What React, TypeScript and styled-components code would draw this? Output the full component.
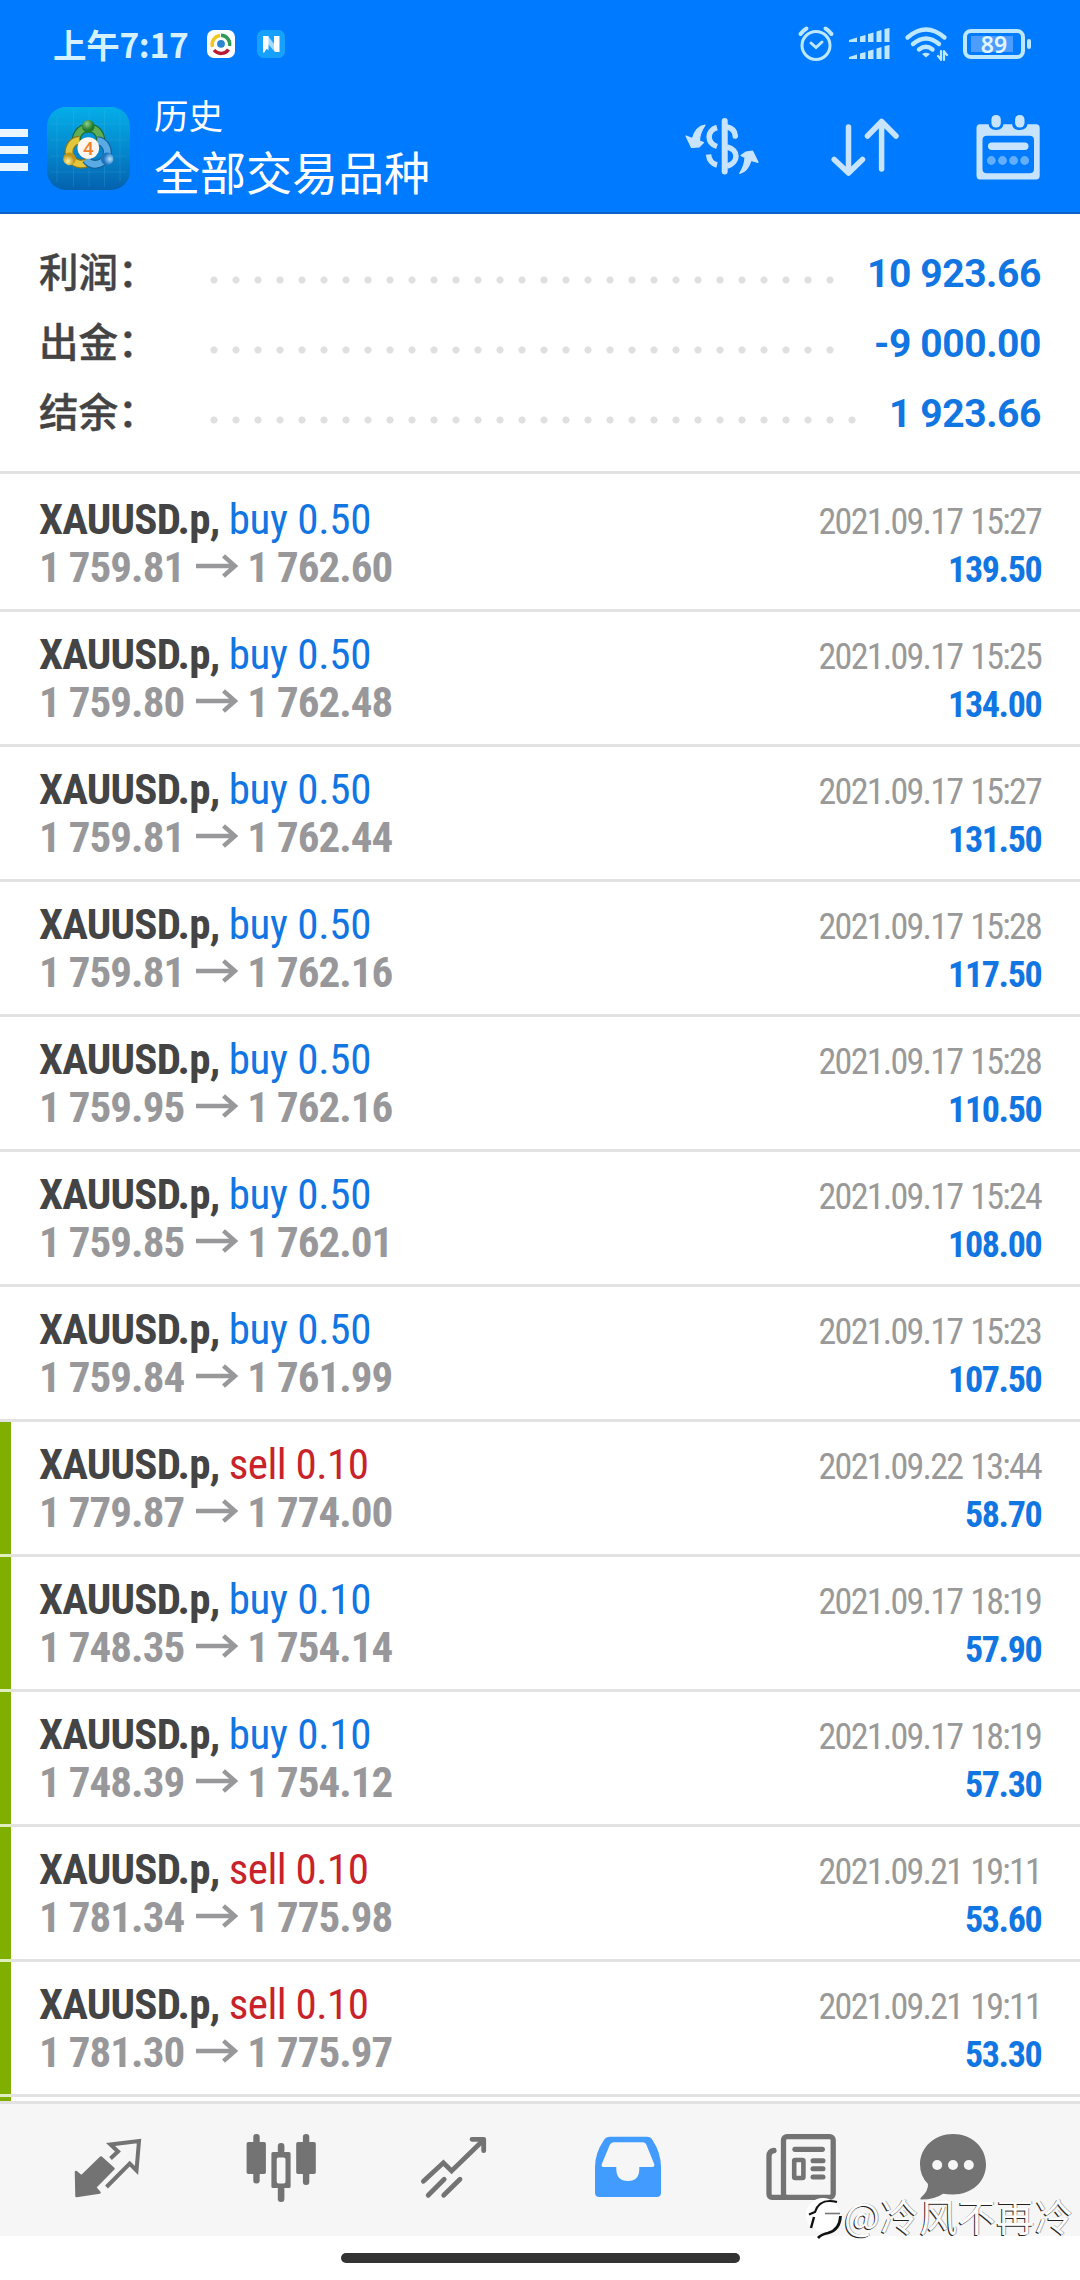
import React from "react";
import styled, { createGlobalStyle, css } from "styled-components";

const cjk = `"Noto Sans CJK SC", sans-serif`;
const condensed = `"Roboto Condensed", Roboto, sans-serif`;

const GlobalStyle = createGlobalStyle`
  * { box-sizing: border-box; }
  body { margin: 0; background: #fff; }
  svg { display: block; overflow: visible; flex: none; }
`;

const Screen = styled.div`
  width: 1080px;
  height: 2280px;
  display: flex;
  flex-direction: column;
  overflow: hidden;
  background: #fff;
`;

/* ---------- status bar + header ---------- */

const Top = styled.header`
  height: 214px;
  flex: none;
  background: #007aff;
  border-bottom: 2px solid #0a63c4;
`;

const StatusBar = styled.div`
  height: 88px;
  padding: 0 49px 0 53px;
  display: flex;
  align-items: center;
  justify-content: space-between;
`;

const StatusGroup = styled.div<{ $gap: number }>`
  display: flex;
  align-items: center;
  gap: ${(p) => p.$gap}px;
`;

const Clock = styled.span`
  width: 132px;
  font: 700 33.5px/48px ${cjk};
  letter-spacing: -0.3px;
  color: #d5f1ff;
  white-space: nowrap;
`;

const BatteryLevel = styled.div`
  display: flex;
  align-items: center;
  gap: 2px;
  &::after {
    content: "";
    width: 4px;
    height: 10px;
    border-radius: 2px;
    background: #bde8ff;
  }
`;

const BatteryCell = styled.div`
  width: 62px;
  height: 30px;
  border: 4px solid #bde8ff;
  border-radius: 8px;
  display: flex;
  justify-content: center;
  padding: 3px;
  font: 600 23px/16px "Noto Sans", sans-serif;
  color: #e2f6ff;
  background: linear-gradient(#4d9dff, #4d9dff) 4px 3px / 42px 16px no-repeat;
`;

const TitleBar = styled.div`
  height: 124px;
  display: flex;
  align-items: center;
  padding: 0 40px 4px 0;
`;

const MenuButton = styled.div`
  flex: none;
  width: 46.5px;
  display: flex;
  flex-direction: column;
  gap: 9px;
  padding-top: 3px;
`;

const MenuLine = styled.i`
  width: 27.5px;
  height: 8px;
  background: #e9f5ff;
`;

const Titles = styled.div`
  flex: 1;
  padding: 0 0 6px 24.5px;
  color: #fff;
  font-family: ${cjk};
`;

const Caption = styled.div`
  font-size: 34.5px;
  line-height: 50px;
`;

const Heading = styled.div`
  font-size: 46px;
  line-height: 62px;
`;

const Actions = styled.div`
  display: flex;
  align-items: flex-start;
  gap: 72px;
  padding-bottom: 4px;
`;

/* ---------- summary ---------- */

const Summary = styled.section`
  flex: none;
  height: 260px;
  padding: 24px 39px 0 39px;
  border-bottom: 3px solid #e2e2e2;
`;

const SummaryRow = styled.div`
  height: 70px;
  display: flex;
  align-items: center;
`;

const SummaryLabel = styled.div`
  width: 164px;
  margin-top: -6px;
  font: 500 39.5px/70px ${cjk};
  -webkit-text-stroke: 0.4px #444;
  color: #444;
`;

const Leader = styled.div<{ $dots: number }>`
  width: ${(p) => p.$dots * 22}px;
  height: 8px;
  margin-top: 14px;
  background: radial-gradient(circle at 11px 4px, #e0e0e0 3.1px, transparent 4px) 0 0 / 22px 8px;
`;

const SummaryValue = styled.div`
  margin: 2px 0 0 auto;
  font: 700 39px/70px Roboto, sans-serif;
  letter-spacing: -0.4px;
  color: #1276e2;
`;

/* ---------- deals ---------- */

const DealList = styled.main`
  flex: none;
  height: 1627px;
  padding-top: 3px;
  overflow: hidden;
`;

const Deal = styled.article<{ $marked?: boolean }>`
  height: 135px;
  display: flex;
  justify-content: space-between;
  padding: 18px 38px 0 39px;
  border-bottom: 3px solid #e2e2e2;
  white-space: nowrap;
  ${(p) =>
    p.$marked &&
    css`
      border-left: 11px solid #7fb000;
      padding-left: 28px;
      border-bottom: 0;
      background: linear-gradient(#e2e2e2, #e2e2e2) 0 100% / 100% 3px no-repeat;
      border-image: linear-gradient(#7fb000 132px, #dfedbf 132px) 0 0 0 11;
    `}
`;

const DealSide = styled.div<{ $end?: boolean }>`
  display: flex;
  flex-direction: column;
  align-items: ${(p) => (p.$end ? "flex-end" : "flex-start")};
`;

const Symbol = styled.div`
  font: 700 43px/48px ${condensed};
  letter-spacing: -0.8px;
  color: #444;
`;

const Order = styled.span<{ $sell: boolean }>`
  font-weight: 400;
  letter-spacing: ${(p) => (p.$sell ? -0.5 : -0.3)}px;
  color: ${(p) => (p.$sell ? "#c8232a" : "#1276e2")};
`;

const Prices = styled.div`
  display: flex;
  align-items: center;
  font: 700 43px/48px ${condensed};
  letter-spacing: -0.95px;
  color: #98989b;
  svg { margin: 0 9.5px 0 11.5px; }
`;

const DealTime = styled.div`
  font: 400 36px/48px ${condensed};
  letter-spacing: -1.75px;
  word-spacing: 1.5px;
  padding: 3px 1px 0 0;
  color: #999;
`;

const DealProfit = styled.div`
  font: 700 36px/48px ${condensed};
  letter-spacing: -1.35px;
  padding-right: 0.6px;
  color: #1276e2;
`;

/* ---------- bottom ---------- */

const NavBar = styled.nav`
  flex: none;
  height: 135px;
  border-top: 3px solid #e2e2e2;
  background: #f6f6f6;
  display: flex;
  align-items: flex-start;
  gap: 101.2px;
  padding: 30px 0 0 72px;
`;

const NavItem = styled.div<{ $last?: boolean; $active?: boolean }>`
  width: 72px;
  height: 72px;
  margin-left: ${(p) => (p.$last ? -20.5 : 0)}px;
  color: ${(p) => (p.$active ? "#429bff" : "#737373")};
`;

const GestureArea = styled.div`
  flex: 1;
  display: flex;
  justify-content: center;
  padding-top: 17px;
`;

const GesturePill = styled.div`
  width: 399px;
  height: 10px;
  border-radius: 5px;
  background: #333;
`;

const Watermark = styled.div`
  position: absolute;
  left: 806px;
  top: 2188px;
  display: flex;
  align-items: center;
  font: 400 37.8px/54px ${cjk};
  letter-spacing: 0.8px;
  color: #fff;
  text-shadow: -1px 1px 0 #222, 1px 0 0 #aaa;
`;

/* ---------- drawings ---------- */

const BrowserBadge = () => (
  <svg width="28" height="28" viewBox="0 0 28 28">
    <rect width="28" height="28" rx="7" fill="#fff" />
    <g fill="none" strokeWidth="3.4">
      <path d="M5.5 17 A9 9 0 0 1 13 5.5" stroke="#f2c81e" />
      <path d="M14 5.2 A9 9 0 0 1 22.5 16" stroke="#2e9a54" />
      <path d="M21.5 19.5 A9 9 0 0 1 7 20" stroke="#b91c32" />
    </g>
    <circle cx="14" cy="13.8" r="3.9" fill="#2b86cf" />
  </svg>
);

const NoteBadge = () => (
  <svg width="28" height="28" viewBox="0 0 28 28">
    <rect width="28" height="28" rx="6.5" fill="#17a1ff" />
    <path d="M11 6 L18 15 V22 L11 14Z" fill="#9fdcff" />
    <path d="M6 6 H11.5 V20 L9.3 19 L7 23 L6 22Z" fill="#fff" />
    <path d="M17 6 H22.5 V22 H18.5 L17 20Z" fill="#fff" />
  </svg>
);

const AlarmIcon = () => (
  <svg width="36" height="36" viewBox="0 0 36 36" fill="none" stroke="#bde8ff" strokeLinecap="round">
    <circle cx="18" cy="19.5" r="14" strokeWidth="3" />
    <path d="M13 17 L18 21.5 L24 16" strokeWidth="3" />
    <path d="M2.5 8 Q5 4.5 8.5 2.5" strokeWidth="4" />
    <path d="M33.5 8 Q31 4.5 27.5 2.5" strokeWidth="4" />
  </svg>
);

const SignalIcon = () => (
  <svg width="41" height="32" viewBox="0 0 41 32" fill="#bde8ff">
    {[0, 17].map((dy) => (
      <g key={dy} transform={`translate(0 ${dy})`}>
        <path d="M0 14 V12 L8 9.5 V14Z" />
        <path d="M11 14 V8.5 L16.5 7 V14Z" />
        <path d="M19 14 V6 L24.5 4.5 V14Z" />
        <path d="M27.5 14 V3.5 L32.5 2 V14Z" />
        <path d="M35.5 14 V1 L40.5 0 V14Z" />
      </g>
    ))}
  </svg>
);

const WifiIcon = () => (
  <svg width="43" height="34" viewBox="0 0 43 34" fill="none" stroke="#bde8ff" strokeWidth="4.4" strokeLinecap="round">
    <path d="M2.5 10.5 Q21 -5.5 39.5 10.5" />
    <path d="M8 17 Q21 6 34 17" />
    <path d="M14 22.5 Q21 17 27.5 22.5" />
    <path d="M17 27 Q21 24.5 25 27 L21 30.5Z" fill="#bde8ff" stroke="none" />
    <path d="M36 24 V33 M36 32.5 L33 29 M39 33 V24 M39 24.5 L42 28" strokeWidth="2.2" />
  </svg>
);

const lobes = [
  { turn: 0, edge: "#1b6a35", fill: "#5fae55", ball: "url(#ballG)" },
  { turn: -120, edge: "#86761b", fill: "#e2c73c", ball: "url(#ballY)" },
  { turn: 120, edge: "#14609d", fill: "#5aabe4", ball: "url(#ballB)" },
];

const AppLogo = () => (
  <svg width="83" height="83" viewBox="0 0 83 83">
    <defs>
      <linearGradient id="logoBg" x1="0" y1="0" x2="0" y2="1">
        <stop offset="0" stopColor="#04aee8" />
        <stop offset="0.55" stopColor="#0486cc" />
        <stop offset="1" stopColor="#0461ae" />
      </linearGradient>
      <radialGradient id="ballG" cx="0.4" cy="0.3"><stop offset="0" stopColor="#8fd08a" /><stop offset="1" stopColor="#1f7a2c" /></radialGradient>
      <radialGradient id="ballY" cx="0.4" cy="0.3"><stop offset="0" stopColor="#fdf3a0" /><stop offset="1" stopColor="#bf9418" /></radialGradient>
      <radialGradient id="ballB" cx="0.4" cy="0.3"><stop offset="0" stopColor="#b5e2ff" /><stop offset="1" stopColor="#1d74bd" /></radialGradient>
    </defs>
    <rect width="83" height="83" rx="19" fill="url(#logoBg)" />
    <path d="M10 8V75M26.5 3V80M42 3V80M57.5 3V80M73 8V75M3 17H80M3 33H80M3 49H80M3 65H80" stroke="#5cc4f0" strokeOpacity="0.18" strokeWidth="1" />
    {lobes.map((l) => (
      <g key={l.turn} transform={`rotate(${l.turn} 41.3 41)`} fill="none">
        <path d="M30.5 37 A12 11.5 0 1 1 52.5 37" stroke={l.edge} strokeWidth="9" />
        <path d="M30.5 37 A12 11.5 0 1 1 52.5 37" stroke={l.fill} strokeWidth="6.6" />
        <circle cx="41.3" cy="19.3" r="6.3" fill={l.ball} />
      </g>
    ))}
    <circle cx="41.3" cy="41" r="10.8" fill="#fff7ef" />
    <text x="41.3" y="48" textAnchor="middle" fontFamily="Roboto, sans-serif" fontWeight="500" fontSize="19" fill="#ef8130">4</text>
  </svg>
);

const CurrencyIcon = () => (
  <svg width="75" height="68" viewBox="0 0 75 68" fill="none" stroke="#c8e4fd" strokeWidth="5.5">
    <path d="M40.7 9 V59.5" strokeWidth="6" strokeLinecap="round" />
    <path d="M33 15.5 C22.500 18.500 22.500 31 33 34.500" />
    <path d="M24.5 42.500 C25 48.500 29 52 33 53" />
    <path d="M43 15 C48 16 51 18.500 51.3 24" strokeLinecap="round" />
    <path d="M43 35 C55 37.500 55 50.500 43 54" />
    <g fill="#c8e4fd" stroke="#c8e4fd" strokeWidth="1.2" strokeLinejoin="round">
      <path d="M2 24 L8.5 26.5 C11 18 15 14 21 13.2 C17 19 15.5 23 15.5 29 L19.5 30.5 L15 35 L7.5 35.5Z" />
      <path d="M74 50.3 L67 48.5 C65 55 61 60 55.7 61.5 C59 56 61 51 61 45.5 L57 43.5 L62 40 L68.5 39Z" />
    </g>
  </svg>
);

const SortIcon = () => (
  <svg width="73" height="66" viewBox="0 0 73 66" fill="none" stroke="#c8e4fd" strokeWidth="5.5" strokeLinecap="round" strokeLinejoin="round">
    <path d="M17.5 15 V61 M3.2 47.5 L17.5 61 L31.5 47.5" />
    <path d="M50.6 57 V9.5 M36.5 24 L50.6 9.5 L65 24" />
  </svg>
);

const CalendarIcon = () => (
  <svg width="64" height="68" viewBox="0 0 64 68" fill="#c8e4fd">
    <path fillRule="evenodd" d="M4 12.3 H60 Q63.7 12.3 63.7 16 V63.5 Q63.7 67.5 60 67.5 H4 Q0.5 67.5 0.5 63.5 V16 Q0.5 12.3 4 12.3Z M11 23.7 Q6.5 23.7 6.5 28 V57 Q6.5 61.3 11 61.3 H53.5 Q58 61.3 58 57 V28 Q58 23.7 53.5 23.7Z" />
    <path d="M12.5 9 H27.5 V11 Q27.5 18 20 18 Q12.5 18 12.5 11Z M36 9 H51.5 V11 Q51.5 18 43.7 18 Q36 18 36 11Z" fill="#007aff" />
    <rect x="15.4" y="3" width="9.4" height="12.5" rx="4.5" />
    <rect x="39.1" y="3" width="9.4" height="12.5" rx="4.5" />
    <rect x="12" y="30.5" width="40.5" height="7.5" rx="3.7" />
    <g opacity="0.5">
      {[15.3, 26.5, 37.6, 48.7].map((x) => <circle key={x} cx={x} cy="48.5" r="4.4" />)}
    </g>
  </svg>
);

const ArrowIcon = () => (
  <svg width="42" height="24" viewBox="0 0 42 24" fill="none" stroke="#98989b" strokeWidth="4.4">
    <path d="M0 11 H39 M27.5 0.8 L39 11 L27.5 21.2" />
  </svg>
);

const QuotesIcon = () => (
  <svg width="72" height="72" viewBox="0 0 72 72" fill="none" stroke="currentColor" strokeLinejoin="round">
    <path d="M4 38 L9.5 42.5 L29 23.5 L41.5 34.7 L23 53.3 L27.5 58.5 L4.5 62Z" fill="currentColor" strokeWidth="2.5" />
    <path d="M38.5 24.5 L46 17.5 L38.5 10.5 L67 7 L64.5 36.5 L57.7 29.5 L34.5 53" strokeWidth="4" strokeLinejoin="miter" />
  </svg>
);

const ChartIcon = () => (
  <svg width="72" height="72" viewBox="0 0 72 72" fill="currentColor">
    <rect x="8.3" y="0" width="6.4" height="49.5" rx="3" />
    <rect x="1.6" y="8" width="19.3" height="32" rx="1.8" />
    <rect x="57.9" y="0" width="6.4" height="51" rx="3" />
    <rect x="51.2" y="8" width="19.6" height="32" rx="1.8" />
    <rect x="32.8" y="9" width="6.6" height="11" rx="3" />
    <rect x="32.8" y="52" width="6.6" height="16" rx="3" />
    <path fillRule="evenodd" d="M28 18 H44 Q45.6 18 45.6 19.6 V52.4 Q45.6 54 44 54 H28 Q26.4 54 26.4 52.4 V19.6 Q26.4 18 28 18Z M33.5 23.5 Q31.7 23.5 31.7 25.5 V47.5 Q31.7 49.5 33.5 49.5 H38.7 Q40.5 49.5 40.5 47.5 V25.5 Q40.5 23.5 38.7 23.5Z" />
  </svg>
);

const TrendIcon = () => (
  <svg width="72" height="72" viewBox="0 0 72 72" fill="none" stroke="currentColor" strokeWidth="4.8" strokeLinecap="round">
    <path d="M5.4 47.3 L25.4 28.8 L33.6 37 L65 6.5" strokeLinejoin="miter" />
    <path d="M54 5.3 H65.7 V16.7" strokeLinejoin="round" />
    <path d="M10.2 61.3 L26.2 45.3 M25.7 61.3 L42 45.3" />
  </svg>
);

const TradesIcon = () => (
  <svg width="72" height="72" viewBox="0 0 72 72" fill="currentColor">
    <path fillRule="evenodd" d="M18 2.7 H55 Q58.5 2.7 60.5 6 Q69 19 69 33 V58.5 Q69 63 64.5 63 H7.5 Q3 63 3 58.5 V33 Q3 19 12 6 Q14 2.7 18 2.7Z M22 8.2 Q19 8.2 17.5 11.5 L9.8 30 Q9 33 11.5 33 H24.3 V35 Q24.3 47 36 47 Q47.3 47 47.3 35 V33 H60 Q63 33 62.2 30 L54.7 11.5 Q53.5 8.2 50.5 8.2Z" />
  </svg>
);

const NewsIcon = () => (
  <svg width="72" height="72" viewBox="0 0 72 72" fill="none" stroke="currentColor" strokeWidth="5.3">
    <rect x="18.5" y="2.7" width="49.7" height="60.6" rx="3.5" />
    <path d="M20 63.3 H7 Q4 63.3 4 60 V22 Q4.2 17 9 16.5" strokeLinecap="round" />
    <path d="M30 15.3 H57.3" strokeLinecap="round" />
    <path d="M48 26.7 H58 M48 34.8 H58 M48 43 H58" strokeLinecap="round" strokeWidth="5" />
    <rect x="29.2" y="26" width="9.2" height="18" rx="1" strokeWidth="4.6" />
  </svg>
);

const ChatIcon = () => (
  <svg width="72" height="72" viewBox="0 0 72 72">
    <path fill="currentColor" d="M36 0 C54.5 0 69 13 69 30.5 C69 48 54.5 60.5 36 60.5 Q30 60.5 26 59.7 Q18 65.5 4.5 65.5 Q2.5 65.5 4 63.5 Q11.5 57 11 50 Q3 42 3 30.5 C3 13 18 0 36 0Z" />
    <g fill="#f6f6f6">
      {[20.2, 36, 51.8].map((x) => <circle key={x} cx={x} cy="31" r="5" />)}
    </g>
  </svg>
);

const WatermarkLogo = () => (
  <svg width="38" height="48" viewBox="0 0 38 48" fill="none">
    <circle cx="17" cy="24" r="17" fill="#fff" />
    <path d="M3 23.5 L9 21 C12 12 18 8 31 11" stroke="#111" strokeWidth="2.2" />
    <path d="M8 26 L5 37" stroke="#111" strokeWidth="2.4" />
    <path d="M19 22.5 H34" stroke="#777" strokeWidth="1.6" />
    <path d="M34.5 25 C34 35 30 40 22 42 Q15 43.5 12 47" stroke="#111" strokeWidth="2.8" />
  </svg>
);

/* ---------- data ---------- */

const summary = [
  { label: "利润：", value: "10 923.66", dots: 29 },
  { label: "出金：", value: "-9 000.00", dots: 29 },
  { label: "结余：", value: "1 923.66", dots: 30 },
];

type DealData = { side: "buy" | "sell"; lot: string; open: string; close: string; time: string; profit: string; marked?: boolean };

const deals: DealData[] = [
  { side: "buy", lot: "0.50", open: "1 759.81", close: "1 762.60", time: "2021.09.17 15:27", profit: "139.50" },
  { side: "buy", lot: "0.50", open: "1 759.80", close: "1 762.48", time: "2021.09.17 15:25", profit: "134.00" },
  { side: "buy", lot: "0.50", open: "1 759.81", close: "1 762.44", time: "2021.09.17 15:27", profit: "131.50" },
  { side: "buy", lot: "0.50", open: "1 759.81", close: "1 762.16", time: "2021.09.17 15:28", profit: "117.50" },
  { side: "buy", lot: "0.50", open: "1 759.95", close: "1 762.16", time: "2021.09.17 15:28", profit: "110.50" },
  { side: "buy", lot: "0.50", open: "1 759.85", close: "1 762.01", time: "2021.09.17 15:24", profit: "108.00" },
  { side: "buy", lot: "0.50", open: "1 759.84", close: "1 761.99", time: "2021.09.17 15:23", profit: "107.50" },
  { side: "sell", lot: "0.10", open: "1 779.87", close: "1 774.00", time: "2021.09.22 13:44", profit: "58.70", marked: true },
  { side: "buy", lot: "0.10", open: "1 748.35", close: "1 754.14", time: "2021.09.17 18:19", profit: "57.90", marked: true },
  { side: "buy", lot: "0.10", open: "1 748.39", close: "1 754.12", time: "2021.09.17 18:19", profit: "57.30", marked: true },
  { side: "sell", lot: "0.10", open: "1 781.34", close: "1 775.98", time: "2021.09.21 19:11", profit: "53.60", marked: true },
  { side: "sell", lot: "0.10", open: "1 781.30", close: "1 775.97", time: "2021.09.21 19:11", profit: "53.30", marked: true },
];

export default function App() {
  return (
    <Screen>
      <GlobalStyle />
      <Top>
        <StatusBar>
          <StatusGroup $gap={22}>
            <Clock>上午7:17</Clock>
            <BrowserBadge />
            <NoteBadge />
          </StatusGroup>
          <StatusGroup $gap={15}>
            <AlarmIcon />
            <SignalIcon />
            <WifiIcon />
            <BatteryLevel>
              <BatteryCell>89</BatteryCell>
            </BatteryLevel>
          </StatusGroup>
        </StatusBar>
        <TitleBar>
          <MenuButton>
            <MenuLine />
            <MenuLine />
            <MenuLine />
          </MenuButton>
          <AppLogo />
          <Titles>
            <Caption>历史</Caption>
            <Heading>全部交易品种</Heading>
          </Titles>
          <Actions>
            <CurrencyIcon />
            <SortIcon />
            <CalendarIcon />
          </Actions>
        </TitleBar>
      </Top>

      <Summary>
        {summary.map((s) => (
          <SummaryRow key={s.label}>
            <SummaryLabel>{s.label}</SummaryLabel>
            <Leader $dots={s.dots} />
            <SummaryValue>{s.value}</SummaryValue>
          </SummaryRow>
        ))}
      </Summary>

      <DealList>
        {deals.map((d, i) => (
          <Deal key={i} $marked={d.marked}>
            <DealSide>
              <Symbol>
                XAUUSD.p, <Order $sell={d.side === "sell"}>{d.side} {d.lot}</Order>
              </Symbol>
              <Prices>
                {d.open}
                <ArrowIcon />
                {d.close}
              </Prices>
            </DealSide>
            <DealSide $end>
              <DealTime>{d.time}</DealTime>
              <DealProfit>{d.profit}</DealProfit>
            </DealSide>
          </Deal>
        ))}
        <Deal $marked />
      </DealList>

      <NavBar>
        <NavItem><QuotesIcon /></NavItem>
        <NavItem><ChartIcon /></NavItem>
        <NavItem><TrendIcon /></NavItem>
        <NavItem $active><TradesIcon /></NavItem>
        <NavItem><NewsIcon /></NavItem>
        <NavItem $last><ChatIcon /></NavItem>
      </NavBar>
      <GestureArea>
        <GesturePill />
      </GestureArea>
      <Watermark>
        <WatermarkLogo />
        @冷风不再冷
      </Watermark>
    </Screen>
  );
}
